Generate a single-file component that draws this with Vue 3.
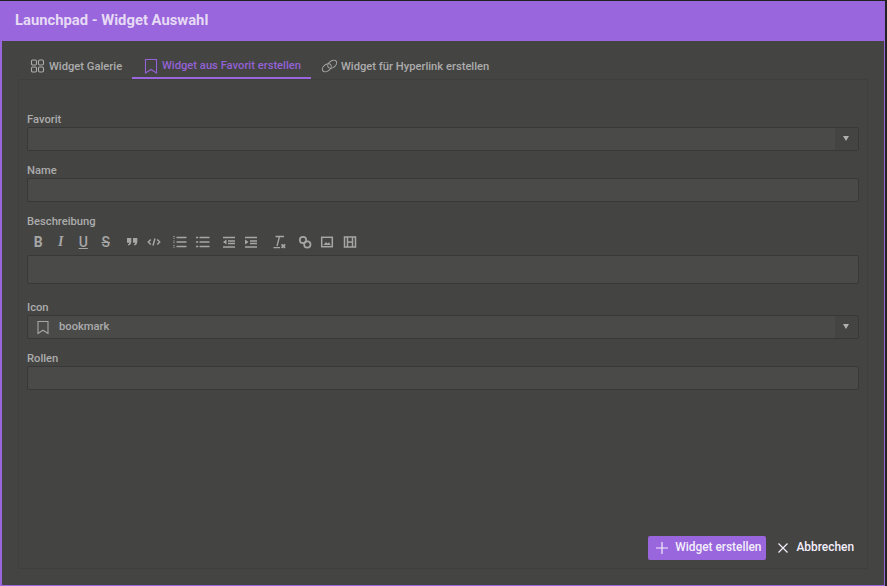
<template>
  <div class="dialog">
    <header class="dialog-title">Launchpad - Widget Auswahl</header>
    <div class="dialog-body">
      <nav class="tabs">
        <div v-for="tab in tabs" :key="tab.label" class="tab" :class="{ active: tab.active }">
          <svg v-if="tab.icon === 'grid'" class="tab-icon" viewBox="0 0 16 16" fill="none" stroke="currentColor" stroke-width="1.1">
            <rect x="1.5" y="2" width="5" height="5" rx="1.2" />
            <rect x="8.5" y="2" width="5" height="5" rx="1.2" />
            <rect x="1.5" y="9" width="5" height="5" rx="1.2" />
            <rect x="8.5" y="9" width="5" height="5" rx="1.2" />
          </svg>
          <svg v-else-if="tab.icon === 'bookmark'" class="tab-icon bookmark" viewBox="0 0 16 16" fill="none" stroke="currentColor" stroke-width="1.1">
            <path d="M2.500 1.500h11v13.500L8 11.500 2.500 15z" />
          </svg>
          <svg v-else class="tab-icon link" viewBox="0 0 17 16" fill="none" stroke="currentColor" stroke-width="1">
            <ellipse cx="5.800" cy="9.800" rx="5" ry="3.300" transform="rotate(-38 5.800 9.800)" />
            <ellipse cx="11.200" cy="6.200" rx="5" ry="3.300" transform="rotate(-38 11.200 6.200)" />
          </svg>
          <span>{{ tab.label }}</span>
        </div>
      </nav>

      <section class="panel">
        <div class="fields">
          <div class="field">
            <label>Favorit</label>
            <div class="input select">
              <span class="arrow"></span>
            </div>
          </div>
          <div class="field">
            <label>Name</label>
            <div class="input"></div>
          </div>
          <div class="field">
            <label>Beschreibung</label>
            <div class="toolbar">
              <span class="tool t-b">B</span>
              <span class="tool t-i">I</span>
              <span class="tool t-u">U</span>
              <span class="tool t-s">S</span>
              <span class="tool group">
                <svg viewBox="0 0 14 14" fill="#a6a6a6">
                  <path d="M2 3h4.300v3.800c0 2-1 3.300-2.900 3.700l-.5-1.200c.9-.3 1.300-.9 1.300-1.600H2zM8 3h4.300v3.800c0 2-1 3.300-2.900 3.700l-.5-1.200c.9-.3 1.300-.9 1.300-1.600H8z" />
                </svg>
              </span>
              <span class="tool">
                <svg viewBox="0 0 14 14" fill="none" stroke="#a6a6a6" stroke-width="1.500">
                  <path d="M3.800 4.500 1.300 7l2.500 2.500M10.200 4.500 12.700 7l-2.500 2.500M8 3.500 6 10.500" />
                </svg>
              </span>
              <span class="tool group">
                <svg viewBox="0 0 14 14" fill="none" stroke="#a6a6a6" stroke-width="1.700">
                  <path d="M3.500 2.500h10M3.500 7h10M3.500 11.500h10" />
                  <path d="M1 1v3M1 5.500v3M1 10v3" stroke-width="1.200" stroke-dasharray="1 .7" />
                </svg>
              </span>
              <span class="tool">
                <svg viewBox="0 0 14 14" fill="none" stroke="#a6a6a6" stroke-width="1.700">
                  <path d="M3.500 2.500h10M3.500 7h10M3.500 11.500h10M0 2.500h2.200M0 7h2.200M0 11.500h2.200" />
                </svg>
              </span>
              <span class="tool group">
                <svg viewBox="0 0 14 14" fill="none" stroke="#a6a6a6" stroke-width="1.600">
                  <path d="M1 2.500h12M6 6h7M6 8.500h7M1 12h12" />
                  <path d="M4.500 4.500v5L1 7z" fill="#a6a6a6" stroke="none" />
                </svg>
              </span>
              <span class="tool">
                <svg viewBox="0 0 14 14" fill="none" stroke="#a6a6a6" stroke-width="1.600">
                  <path d="M1 2.500h12M6 6h7M6 8.500h7M1 12h12" />
                  <path d="M1 4.500v5L4.500 7z" fill="#a6a6a6" stroke="none" />
                </svg>
              </span>
              <span class="tool group wide">
                <svg viewBox="0 0 14 14" fill="none" stroke="#a6a6a6" stroke-width="1.300">
                  <path d="M3.500 1.500h8.500M7.500 1.500 5 11M1.500 12.700h6.500" />
                  <path d="M9.500 9.300l3.600 3.600M13.100 9.300l-3.600 3.600" stroke-width="1.700" />
                </svg>
              </span>
              <span class="tool group">
                <svg viewBox="0 0 14 14" fill="none" stroke="#a6a6a6" stroke-width="1.700">
                  <circle cx="5" cy="5" r="3.200" />
                  <circle cx="9.300" cy="9.500" r="3.200" />
                </svg>
              </span>
              <span class="tool">
                <svg viewBox="0 0 14 14" fill="none" stroke="#a6a6a6" stroke-width="1.500">
                  <rect x="1.700" y="2.300" width="10.600" height="9.400" />
                  <path d="M3.500 10 6 7l1.500 1.500L9 7.200l1.700 2.800z" fill="#a6a6a6" stroke="none" />
                </svg>
              </span>
              <span class="tool">
                <svg viewBox="0 0 14 14" fill="none" stroke="#a6a6a6" stroke-width="1.500">
                  <rect x="1.500" y="2" width="11" height="10" />
                  <path d="M4.500 2v10M9.500 2v10M4.500 7h5" />
                </svg>
              </span>
            </div>
            <div class="input editor"></div>
          </div>
          <div class="field icon-field">
            <label>Icon</label>
            <div class="input select">
              <svg class="value-icon" viewBox="0 0 16 16" fill="none" stroke="#a6a6a6" stroke-width="1.100">
                <path d="M3 2.500h10v12L8 11.200 3 14.500z" />
              </svg>
              <span class="value">bookmark</span>
              <span class="arrow"></span>
            </div>
          </div>
          <div class="field">
            <label>Rollen</label>
            <div class="input"></div>
          </div>
        </div>

        <footer class="actions">
          <button class="btn primary">
            <svg viewBox="0 0 14 14" fill="none" stroke="currentColor" stroke-width="1.200">
              <path d="M7 1v12M1 7h12" />
            </svg>
            Widget erstellen
          </button>
          <button class="btn plain">
            <svg viewBox="0 0 14 14" fill="none" stroke="currentColor" stroke-width="1.200">
              <path d="M2.500 2.500l9 9M11.500 2.500l-9 9" />
            </svg>
            Abbrechen
          </button>
        </footer>
      </section>
    </div>
  </div>
</template>

<script setup>
const tabs = [
  { label: 'Widget Galerie', icon: 'grid' },
  { label: 'Widget aus Favorit erstellen', icon: 'bookmark', active: true },
  { label: 'Widget für Hyperlink erstellen', icon: 'link' }
];
</script>

<style>
html,
body {
  background: #222222;
  overflow: hidden;
}
</style>

<style scoped>
.dialog {
  width: 885px;
  height: 585px;
  margin-top: 1px;
  display: flex;
  flex-direction: column;
  font-family: Roboto, "Liberation Sans", sans-serif;
  font-size: 11.2px;
  font-weight: 500;
  color: #acacac;
  background: #9966dd;
}

.dialog-title {
  height: 40px;
  flex: none;
  display: flex;
  align-items: center;
  padding: 0 0 2px 15px;
  box-sizing: border-box;
  font-size: 14.800px;
  font-weight: 700;
  color: #e6daf5;
}

.dialog-body {
  flex: 1;
  min-height: 0;
  margin: 0 1px 1px 2px;
  padding: 9px 16px 16px;
  display: flex;
  flex-direction: column;
  background: #444443;
}

.tabs {
  height: 29px;
  flex: none;
  display: flex;
}

.tab {
  display: flex;
  align-items: center;
  gap: 3px;
  height: 100%;
  padding: 3px 10px 0 12px;
  box-sizing: border-box;
  white-space: nowrap;
}

.tab:first-child {
  width: 114px;
}

.tab.active {
  width: 179px;
  padding-left: 11px;
  color: #9462d6;
  border-bottom: 2px solid #9966dd;
}

.tab:last-child {
  padding-left: 10px;
}

.tab-icon {
  width: 16px;
  height: 16px;
  flex: none;
}

.tab-icon.bookmark {
  position: relative;
  top: 1px;
}

.tab-icon.link {
  width: 17px;
}

.panel {
  flex: 1;
  min-height: 0;
  display: flex;
  flex-direction: column;
  padding: 32px 8px 8px;
  border: 1px solid #3f3f3e;
}

.fields {
  flex: 1;
  display: flex;
  flex-direction: column;
  gap: 12px;
}

.field {
  display: flex;
  flex-direction: column;
}

.field label {
  height: 15px;
  line-height: 15px;
}

.input {
  height: 24px;
  box-sizing: border-box;
  display: flex;
  align-items: center;
  background: #4a4a49;
  border: 1px solid #383838;
  border-radius: 2px;
}

.select .arrow {
  margin-left: auto;
  align-self: stretch;
  width: 23px;
  background: #444443;
  position: relative;
}

.select .arrow::after {
  content: "";
  position: absolute;
  left: 8px;
  top: 8px;
  border-left: 3.500px solid transparent;
  border-right: 3.500px solid transparent;
  border-top: 5px solid #b0b0b0;
}

.toolbar {
  height: 18px;
  display: flex;
  align-items: center;
  margin: 4px 0;
}

.tool {
  width: 22.500px;
  height: 18px;
  flex: none;
  display: flex;
  align-items: center;
  justify-content: center;
  font-size: 14px;
  line-height: 18px;
  color: #a6a6a6;
}

.tool svg {
  width: 14px;
  height: 14px;
}

.tool.group {
  margin-left: 3.500px;
}

.tool.wide {
  margin-left: 5px;
}

.t-b {
  font-weight: 700;
}

.t-i {
  font-family: "Liberation Serif", serif;
  font-style: italic;
  font-weight: 700;
}

.t-u {
  text-decoration: underline;
  font-weight: 500;
}

.t-s {
  text-decoration: line-through;
  font-weight: 500;
}

.editor {
  height: 29px;
}

.icon-field {
  margin-top: 4px;
}

.value-icon {
  width: 16px;
  height: 16px;
  margin-left: 7px;
  flex: none;
}

.value {
  margin-left: 8px;
  padding-bottom: 2px;
}

.actions {
  flex: none;
  display: flex;
  justify-content: flex-end;
}

.btn {
  display: flex;
  align-items: center;
  gap: 6.500px;
  height: 24px;
  border: 0;
  border-radius: 2px;
  padding: 0 5px 2px 6.500px;
  font: inherit;
  font-size: 11.900px;
  color: #f3eefb;
  background: none;
}

.btn svg {
  width: 14px;
  height: 14px;
  position: relative;
  top: 1px;
}

.primary {
  background: #9966dd;
}

.plain {
  margin-left: 3px;
}
</style>
